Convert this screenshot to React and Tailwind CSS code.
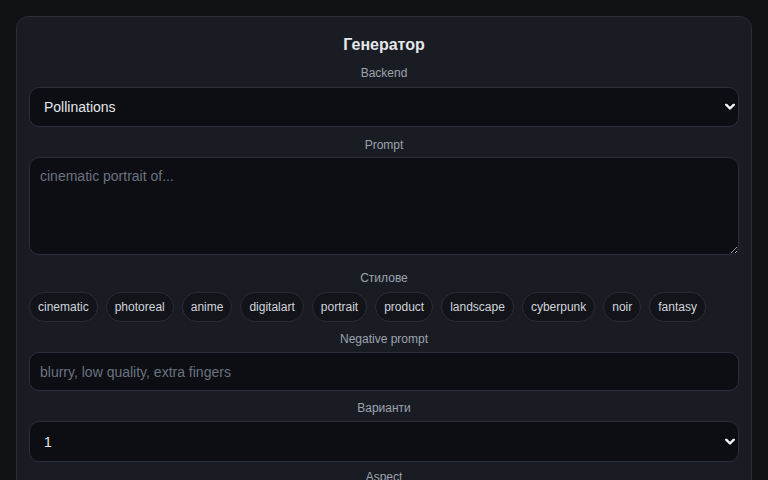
import React from "react";

const chips = ["cinematic", "photoreal", "anime", "digitalart", "portrait", "product", "landscape", "cyberpunk", "noir", "fantasy"];

function Chevron() {
  return (
    <svg className="pointer-events-none absolute right-[4px] top-1/2 -translate-y-1/2" width="10" height="7" viewBox="0 0 10 7" fill="none">
      <path d="M1.2 1.2 L5 5 L8.8 1.2" stroke="#f3f4f6" strokeWidth="2.4" strokeLinecap="round" strokeLinejoin="round" />
    </svg>
  );
}

function Label({ children, className = "" }) {
  return <div className={"text-center text-xs leading-4 text-[#9ca3af] " + className}>{children}</div>;
}

function Select({ value, h }) {
  return (
    <div className="relative">
      <select
        defaultValue={value}
        className={"block w-full appearance-none rounded-[10px] border border-[#2b2f3a] bg-[#0c0e13] pl-[14px] pr-6 text-sm text-[#e5e7eb] outline-none [color-scheme:dark] " + h}
      >
        <option>{value}</option>
      </select>
      <Chevron />
    </div>
  );
}

export default function App() {
  return (
    <div className="min-h-screen bg-[#111215] px-4 pt-4 font-['Liberation_Sans',Arial,sans-serif]">
      <div className="h-[600px] rounded-xl border border-[#2a2d36] bg-[#1a1c23] px-3 pt-4">
        <h2 className="text-center text-base font-bold leading-6 text-[#e5e7eb]">Генератор</h2>

        <Label className="mt-2 mb-[6px]">Backend</Label>
        <Select value="Pollinations" h="h-[40px]" />

        <Label className="mt-[10px] mb-[4px]">Prompt</Label>
        <textarea
          placeholder="cinematic portrait of..."
          className="block h-[98px] w-full rounded-[10px] border border-[#2b2f3a] bg-[#0c0e13] px-[10px] py-2 text-sm text-[#e5e7eb] outline-none placeholder:text-[#6b7280] [color-scheme:dark]"
        />

        <Label className="mt-[15px] mb-[6px]">Стилове</Label>
        <div className="flex flex-wrap gap-2">
          {chips.map((c) => (
            <span key={c} className="rounded-full border border-[#2a2d36] bg-[#12141a] px-2 py-[6px] text-xs leading-4 text-[#d1d5db]">
              {c}
            </span>
          ))}
        </div>

        <Label className="mt-[9px] mb-[5px]">Negative prompt</Label>
        <input
          placeholder="blurry, low quality, extra fingers"
          className="block h-[39px] w-full rounded-[10px] border border-[#2b2f3a] bg-[#0c0e13] px-[10px] text-sm text-[#e5e7eb] outline-none placeholder:text-[#6b7280]"
        />

        <Label className="mt-[9px] mb-[5px]">Варианти</Label>
        <Select value="1" h="h-[41px]" />

        <Label className="mt-[7px]">Aspect</Label>
      </div>
    </div>
  );
}
